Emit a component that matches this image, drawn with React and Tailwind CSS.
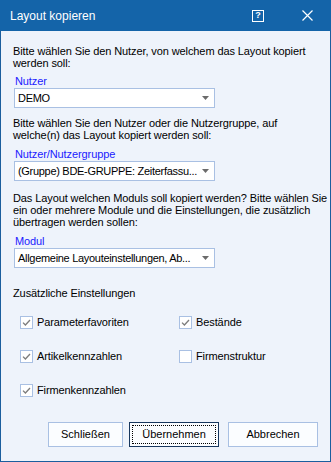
import React from 'react';

const font = { fontFamily: '"Liberation Sans", Arial, sans-serif' };

const Dropdown = ({ value }) => (
  <div className="ml-px flex h-[20px] w-[201px] items-center border border-[#a9c0e3] bg-white pl-[3px] pr-[5px]">
    <span className="min-w-0 flex-1 overflow-visible whitespace-nowrap text-[11px] leading-none tracking-[-0.3px] text-black">{value}</span>
    <svg width="7" height="4" viewBox="0 0 7 4" className="ml-[3px] shrink-0">
      <path d="M0 0 H7 L3.5 4 Z" fill="#6b6b6b" />
    </svg>
  </div>
);

const Check = ({ label, checked }) => (
  <div className="flex h-[14px] items-center">
    <div className="flex h-[13px] w-[13px] items-center justify-center border border-[#a9c0e3] bg-white">
      {checked && (
        <svg width="9" height="7" viewBox="0 0 9 7">
          <path d="M1 3.6 L3.4 6 L8 1" fill="none" stroke="#7d7d7d" strokeWidth="1.3" />
        </svg>
      )}
    </div>
    <span className="ml-[4px] whitespace-nowrap text-[11px] leading-none text-black">{label}</span>
  </div>
);

const Button = ({ children, width, focused }) => (
  <div
    className={`flex h-[25px] items-center justify-center text-[11px] text-black ${
      focused ? 'border border-[#17375e] bg-[#fbfdff] p-[2px]' : 'border border-[#a9c0e3] bg-[#fbfdff]'
    }`}
    style={{ width }}
  >
    {focused ? (
      <div className="flex h-full w-full items-center justify-center border border-dotted border-black">{children}</div>
    ) : (
      children
    )}
  </div>
);

export default function App() {
  return (
    <div style={font} className="flex h-[462px] w-[331px] flex-col border-x border-b border-[#1b5e9e] bg-[#eef3fb]">
      {/* title bar */}
      <div className="-mx-px flex h-[31px] shrink-0 items-center bg-[#1464a9] pl-[10px] text-white">
        <span className="text-[12px]">Layout kopieren</span>
        <div className="ml-auto flex items-center">
          <div className="flex h-[12px] w-[12px] items-center justify-center border border-white text-[9px] font-bold leading-none">?</div>
          <svg width="11" height="11" viewBox="0 0 11 11" className="ml-[38px] mr-[18px]">
            <path d="M0.5 0.5 L10.5 10.5 M10.5 0.5 L0.5 10.5" stroke="white" strokeWidth="1.2" />
          </svg>
        </div>
      </div>

      <div className="whitespace-nowrap pl-[12px] text-[11px] leading-[12px] tracking-[-0.1px] text-black">
        <p className="mt-[14px]">
          Bitte wählen Sie den Nutzer, von welchem das Layout kopiert
          <br />
          werden soll:
        </p>
        <p className="mt-[6px] pl-[2px] text-[#1a1aff]">Nutzer</p>
        <div className="mt-[1px]">
          <Dropdown value="DEMO" />
        </div>

        <p className="mt-[9px]">
          Bitte wählen Sie den Nutzer oder die Nutzergruppe, auf
          <br />
          welche(n) das Layout kopiert werden soll:
        </p>
        <p className="mt-[7px] pl-[2px] text-[#1a1aff]">Nutzer/Nutzergruppe</p>
        <div className="mt-[1px]">
          <Dropdown value="(Gruppe) BDE-GRUPPE: Zeiterfassu..." />
        </div>

        <p className="mt-[11px]">
          Das Layout welchen Moduls soll kopiert werden? Bitte wählen Sie
          <br />
          ein oder mehrere Module und die Einstellungen, die zusätzlich
          <br />
          übertragen werden sollen:
        </p>
        <p className="mt-[7px] pl-[2px] text-[#1a1aff]">Modul</p>
        <div className="mt-[1px]">
          <Dropdown value="Allgemeine Layouteinstellungen, Ab..." />
        </div>

        <p className="mt-[19px]">Zusätzliche Einstellungen</p>

        <div className="mt-[16px] grid grid-cols-[159px_1fr] gap-y-[20px] pl-[7px]">
          <Check label="Parameterfavoriten" checked />
          <Check label="Bestände" checked />
          <Check label="Artikelkennzahlen" checked />
          <Check label="Firmenstruktur" checked={false} />
          <Check label="Firmenkennzahlen" checked />
        </div>
      </div>

      <div className="mt-auto mb-[14px] flex pl-[47px]">
        <Button width={75}>Schließen</Button>
        <div className="ml-[6px]">
          <Button width={90} focused>Übernehmen</Button>
        </div>
        <div className="ml-[9px]">
          <Button width={90}>Abbrechen</Button>
        </div>
      </div>
    </div>
  );
}
